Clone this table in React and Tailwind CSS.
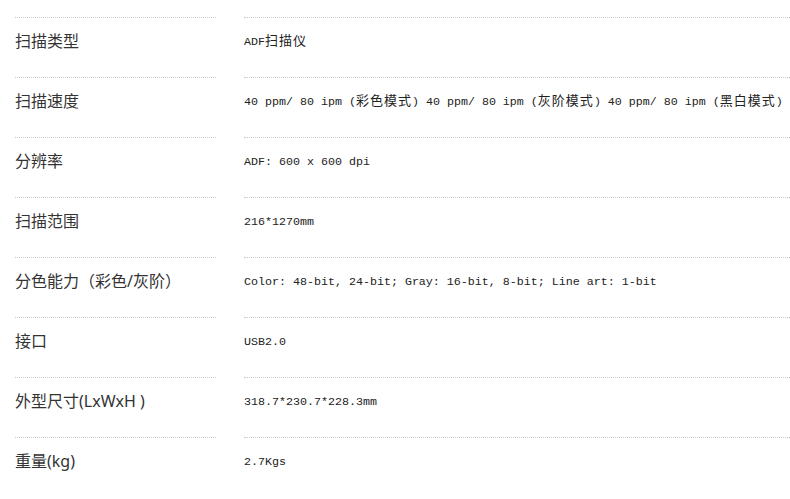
const rows = [
  ["扫描类型", [["m", "ADF"], ["c", "扫描仪"]]],
  ["扫描速度", [["m", "40 ppm/ 80 ipm ("], ["c", "彩色模式"], ["m", ") 40 ppm/ 80 ipm ("], ["c", "灰阶模式"], ["m", ") 40 ppm/ 80 ipm ("], ["c", "黑白模式"], ["m", ")"]]],
  ["分辨率", [["m", "ADF: 600 x 600 dpi"]]],
  ["扫描范围", [["m", "216*1270mm"]]],
  ["分色能力（彩色/灰阶）", [["m", "Color: 48-bit, 24-bit; Gray: 16-bit, 8-bit; Line art: 1-bit"]]],
  ["接口", [["m", "USB2.0"]]],
  ["外型尺寸(LxWxH )", [["m", "318.7*230.7*228.3mm"]]],
  ["重量(kg)", [["m", "2.7Kgs"]]],
];

export default function App() {
  return (
    <div className="w-[790px] h-[499px] bg-white overflow-hidden pt-[17px]">
      {rows.map(([label, parts], i) => (
        <div key={i} className="flex h-[60px]">
          <div className="ml-[15px] w-[201px] border-t border-dotted border-[#c8c8c8] pt-[12px] text-[16px] leading-[22px] text-[#333] whitespace-nowrap [font-family:'Noto_Sans','Noto_Sans_CJK_SC',sans-serif]">
            {label}
          </div>
          <div className="ml-[28px] flex-1 border-t border-dotted border-[#c8c8c8] pt-[16px] text-[11.67px] leading-[16px] text-[#222] whitespace-nowrap [font-family:'Liberation_Mono',monospace]">
            {parts.map(([t, s], j) =>
              t === "m" ? (
                <span key={j}>{s}</span>
              ) : (
                <span key={j} className="text-[13px] leading-[8px] tracking-[1px] [font-family:'Noto_Sans_CJK_SC',sans-serif]">{s}</span>
              )
            )}
          </div>
        </div>
      ))}
    </div>
  );
}
